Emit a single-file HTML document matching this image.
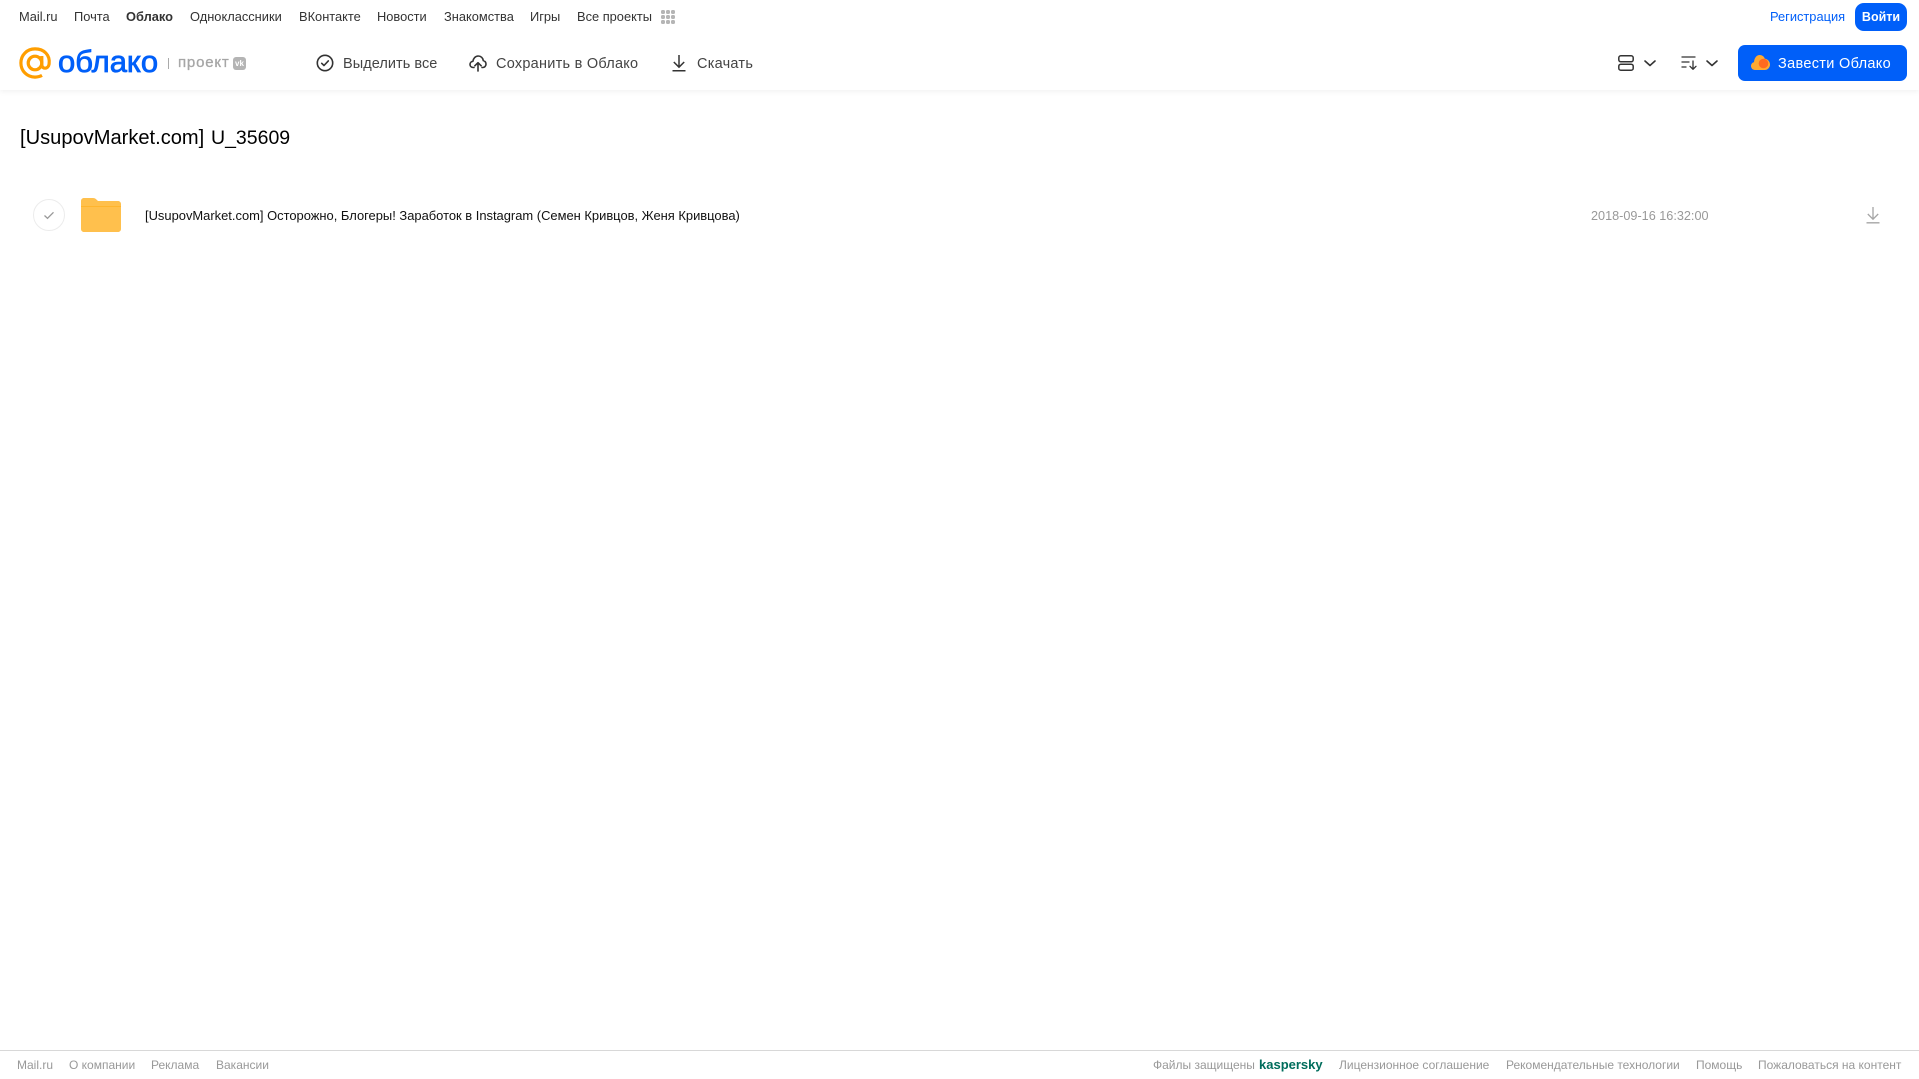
<!DOCTYPE html>
<html lang="ru"><head><meta charset="utf-8"><title>Облако</title>
<style>
html,body{margin:0;padding:0;background:#fff}
body{position:relative;width:1919px;height:1079px;overflow:hidden;font-family:"Liberation Sans",sans-serif}
.t{position:absolute;white-space:nowrap;line-height:16px}
.n{top:9px;font-size:12.85px;color:#333}
.a{top:55.500px;font-size:14.5px;color:#444;letter-spacing:.25px}
.f{top:1057px;font-size:12px;color:#999}
svg{position:absolute;overflow:visible}
</style></head><body>
<div style="position:absolute;left:0;top:0;width:1919px;height:90px;background:#fff;box-shadow:0 1px 6px rgba(0,0,0,.07)"></div>

<span class="t n" style="left:19px">Mail.ru</span>
<span class="t n" style="left:74px">Почта</span>
<span class="t n" style="left:126px;font-weight:bold">Облако</span>
<span class="t n" style="left:190px">Одноклассники</span>
<span class="t n" style="left:299px">ВКонтакте</span>
<span class="t n" style="left:377px">Новости</span>
<span class="t n" style="left:444px">Знакомства</span>
<span class="t n" style="left:530px">Игры</span>
<span class="t n" style="left:577px">Все проекты</span>
<svg style="left:661px;top:10px" width="14" height="14" fill="#b5b5b5"><rect width="4" height="4" rx="1.500"/><rect x="5" width="4" height="4" rx="1.500"/><rect x="10" width="4" height="4" rx="1.500"/><rect y="5" width="4" height="4" rx="1.500"/><rect x="5" y="5" width="4" height="4" rx="1.500"/><rect x="10" y="5" width="4" height="4" rx="1.500"/><rect y="10" width="4" height="4" rx="1.500"/><rect x="5" y="10" width="4" height="4" rx="1.500"/><rect x="10" y="10" width="4" height="4" rx="1.500"/></svg>

<span class="t n" style="left:1770px;color:#005ff9">Регистрация</span>
<div class="t" style="left:1855px;top:3px;width:52px;height:28px;line-height:28px;background:#005ff9;border-radius:9px;color:#fff;font-size:12.5px;font-weight:bold;text-align:center">Войти</div>

<svg style="left:19px;top:47px" width="33" height="33" viewBox="0 0 33 33" fill="none" stroke="#ff9e00" stroke-width="3.2"><circle cx="16" cy="16" r="6.800"/><path d="M22.800 9v8.500c0 5 6.500 5 7.300-.5C31.300 8 25 1.900 16 1.900 8 1.900 1.900 8 1.900 16S8 30.100 16 30.100c3 0 5-.6 7-1.700"/></svg>
<span class="t" style="left:58px;top:44px;font-size:31px;line-height:36px;color:#005ff9;-webkit-text-stroke:.8px #005ff9">облако</span>
<div style="position:absolute;left:168px;top:58px;width:1px;height:11px;background:#aaa"></div>
<span class="t" style="left:178px;top:54px;font-size:15px;line-height:18px;color:#a6a6a6;letter-spacing:.8px;-webkit-text-stroke:.3px #a6a6a6">проект</span>
<div class="t" style="left:233px;top:57px;width:13px;height:13px;border-radius:3px;background:#b4b4b4;color:#fff;font-size:8px;line-height:13px;font-weight:bold;text-align:center">vk</div>

<svg style="left:316px;top:54px" width="18" height="18" viewBox="0 0 18 18" fill="none" stroke="#333" stroke-width="1.600"><circle cx="9" cy="9" r="7.700"/><path d="M5.700 9.300l2.300 2.200 4.300-4.600" stroke-linecap="round" stroke-linejoin="round"/></svg>
<span class="t a" style="left:343px;letter-spacing:.05px">Выделить все</span>

<svg style="left:469px;top:55px" width="18" height="17" viewBox="0 0 18 17" fill="none" stroke="#333" stroke-width="1.600" stroke-linecap="round" stroke-linejoin="round"><path d="M5 12.500H4.200C2.300 12.500 1 11.100 1 9.400c0-1.700 1.300-3 2.900-3.100C4.300 3.300 6.400 1 9.200 1c2.700 0 4.800 2 5.100 4.600 1.600.4 2.700 1.800 2.700 3.500 0 1.900-1.400 3.400-3.300 3.400H13"/><path d="M9 16V8M5.800 10.800L9 7.700l3.200 3.100"/></svg>
<span class="t a" style="left:496px">Сохранить в Облако</span>

<svg style="left:672px;top:54px" width="14" height="18" viewBox="0 0 14 18" fill="none" stroke="#333" stroke-width="1.500"><path d="M7 1v12M1.800 8L7 13.200 12.200 8M0.500 16.800h13"/></svg>
<span class="t a" style="left:697px">Скачать</span>

<svg style="left:1618px;top:55px" width="16" height="16" viewBox="0 0 16 16" fill="none" stroke="#333" stroke-width="1.500"><rect x=".8" y=".8" width="14.400" height="6" rx="2"/><rect x=".8" y="9.200" width="14.400" height="6" rx="2"/></svg>
<svg style="left:1644px;top:60px" width="12" height="7" viewBox="0 0 12 7" fill="none" stroke="#333" stroke-width="1.600" stroke-linecap="round" stroke-linejoin="round"><path d="M1 1l5 4.500L11 1"/></svg>
<svg style="left:1681px;top:55px" width="17" height="16" viewBox="0 0 17 16" fill="none" stroke="#333" stroke-width="1.300" stroke-linecap="round" stroke-linejoin="round"><path d="M1 2h13M1 7h7M1 12h4M12 6v8M9 11.300l3 3 3-3"/></svg>
<svg style="left:1706px;top:60px" width="12" height="7" viewBox="0 0 12 7" fill="none" stroke="#333" stroke-width="1.600" stroke-linecap="round" stroke-linejoin="round"><path d="M1 1l5 4.500L11 1"/></svg>

<div style="position:absolute;left:1738px;top:45px;width:169px;height:36px;background:#005ff9;border-radius:7px"></div>
<svg style="left:1751px;top:54px" width="19" height="17" viewBox="0 0 19 17"><path d="M4 16C1.800 16 0 14.200 0 12c0-2 1.300-3.500 3-3.900C3.400 3.500 5.800 1 8.600 1c2.500 0 4.500 1.500 5.200 3.700 2.900.2 5.200 2.800 5.200 5.800 0 3-2.300 5.500-5.200 5.500z" fill="#ffa930"/><circle cx="12.500" cy="9.500" r="4.800" fill="#ff6a1f"/></svg>
<span class="t a" style="left:1778px;color:#fff;letter-spacing:.32px">Завести Облако</span>

<span class="t" style="left:20px;top:125px;font-size:20.1px;line-height:26px;color:#000">[UsupovMarket.com]</span>
<span class="t" style="left:211px;top:125px;font-size:19.500px;line-height:26px;color:#000">U_35609</span>

<div style="position:absolute;left:33px;top:199px;width:30px;height:30px;border:1px solid #ececec;border-radius:50%"></div>
<svg style="left:43px;top:211px" width="12" height="9" viewBox="0 0 12 9" fill="none" stroke="#999" stroke-width="1.300"><path d="M1.500 4.500l3 2.800 6-6"/></svg>
<svg style="left:81px;top:198px" width="40" height="34" viewBox="0 0 40 34"><path d="M3 0h9c1.500 0 2.500.6 3.400 1.500L17 3h20c1.700 0 3 1.300 3 3v25c0 1.700-1.300 3-3 3H3c-1.700 0-3-1.300-3-3V3C0 1.300 1.300 0 3 0z" fill="#ffc04d"/><path d="M0 8h40v1H0z" fill="#ffb52e"/></svg>
<span class="t" style="left:145px;top:207.500px;font-size:12.93px;color:#111">[UsupovMarket.com] Осторожно, Блогеры! Заработок в Instagram (Семен Кривцов, Женя Кривцова)</span>
<span class="t" style="left:1591px;top:207.500px;font-size:12.66px;color:#999">2018-09-16 16:32:00</span>
<svg style="left:1866px;top:206px" width="14" height="18" viewBox="0 0 14 18" fill="none" stroke="#a5a5a5" stroke-width="1.300"><path d="M7 1v12M1.800 8L7 13.200 12.200 8M0.500 16.800h13"/></svg>

<div style="position:absolute;left:0;top:1050px;width:1919px;height:1px;background:#d8d8d8"></div>
<span class="t f" style="left:17px">Mail.ru</span>
<span class="t f" style="left:69px">О компании</span>
<span class="t f" style="left:151px">Реклама</span>
<span class="t f" style="left:216px">Вакансии</span>
<span class="t f" style="left:1153px">Файлы защищены</span>
<span class="t f" style="left:1259px;font-size:13px;font-weight:bold;color:#006d5c">kaspersky</span>
<span class="t f" style="left:1339px">Лицензионное соглашение</span>
<span class="t f" style="left:1506px">Рекомендательные технологии</span>
<span class="t f" style="left:1696px">Помощь</span>
<span class="t f" style="left:1758px">Пожаловаться на контент</span>
</body></html>
